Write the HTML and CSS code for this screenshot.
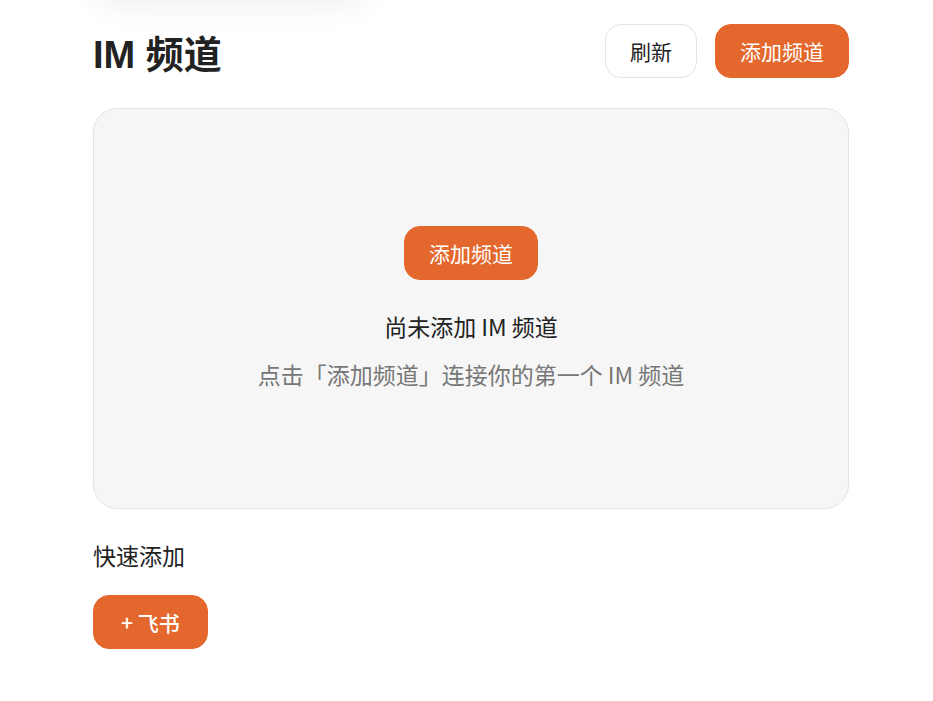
FILE: index.html
```html
<!DOCTYPE html>
<html lang="zh-CN">
<head>
  <meta charset="UTF-8">
  <title>IM 频道</title>
  <link rel="stylesheet" href="styles.css">
</head>
<body>
  <div class="top-shade"></div>
  <div class="page">
    <div class="page-header">
      <h1>IM 频道</h1>
      <div class="actions">
        <button class="btn btn-ghost">刷新</button>
        <button class="btn btn-primary">添加频道</button>
      </div>
    </div>

    <div class="empty-card">
      <button class="btn btn-primary">添加频道</button>
      <p class="empty-title">尚未添加 IM 频道</p>
      <p class="empty-desc">点击「添加频道」连接你的第一个 IM 频道</p>
    </div>

    <div class="quick">
      <div class="quick-label">快速添加</div>
      <button class="btn btn-primary btn-bold">+ 飞书</button>
    </div>
  </div>
</body>
</html>
```

FILE: styles.css
```css
body {
  font-family: "Noto Sans CJK SC", "Noto Sans", sans-serif;
  background: #ffffff;
  color: #222222;
  margin: 0;
  position: relative;
}

.top-shade {
  position: absolute;
  top: -70px;
  left: 90px;
  width: 280px;
  height: 70px;
  border-radius: 30px;
  box-shadow: 0 8px 30px rgba(0, 0, 0, 0.06);
}

.page {
  width: 756px;
  margin-left: 93px;
  padding-top: 24px;
}

.page-header {
  display: flex;
  justify-content: space-between;
  align-items: center;
  height: 53px;
}

h1 {
  margin: 0;
  font-family: "Liberation Sans", "Noto Sans CJK SC", sans-serif;
  font-size: 38px;
  font-weight: 700;
  color: #222222;
  padding-top: 2px;
}

.actions {
  display: flex;
  gap: 18px;
}

.btn {
  font-family: inherit;
  font-size: 21px;
  line-height: 26px;
  padding: 13px 24px;
  border-radius: 16px;
  border: 1px solid transparent;
  cursor: pointer;
}

.btn-ghost {
  background: #ffffff;
  border-color: #e4e4e4;
  color: #222222;
}

.btn-primary {
  background: #e4682d;
  border-color: #e4682d;
  color: #ffffff;
}

.btn-bold {
  font-weight: 500;
  padding-left: 27px;
  padding-right: 27px;
}

.empty-card {
  margin-top: 31px;
  height: 401px;
  box-sizing: border-box;
  background: #f6f6f6;
  border: 1px solid #e4e4e4;
  border-radius: 24px;
  display: flex;
  flex-direction: column;
  align-items: center;
  justify-content: center;
}

.empty-title {
  margin: 30px 0 0;
  font-size: 23px;
  line-height: 33px;
  color: #222222;
}

.empty-desc {
  margin: 15px 0 0;
  font-size: 23px;
  line-height: 33px;
  color: #777777;
}

.quick {
  margin-top: 30px;
}

.quick-label {
  font-size: 23px;
  line-height: 33px;
  margin-bottom: 23px;
}
```
